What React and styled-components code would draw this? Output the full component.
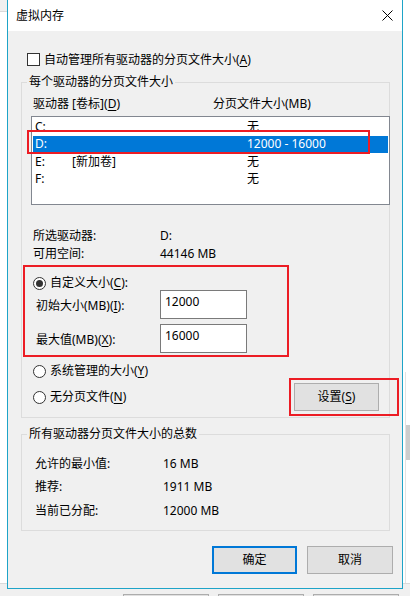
import styled, { createGlobalStyle } from "styled-components"

const GlobalStyle = createGlobalStyle`
  html, body {
    margin: 0;
    padding: 0;
  }
  body {
    background: #fff;
    font-family: "Noto Sans", "Noto Sans CJK SC", sans-serif;
    font-size: 12px;
    color: #000;
  }
  u {
    text-decoration: underline;
    text-underline-offset: 2px;
  }
`

const Desktop = styled.div`
  position: relative;
  width: 410px;
  height: 596px;
  overflow: hidden;
  background: #fff;
`

const BackCorner = styled.div`
  position: absolute;
  left: 0;
  top: 0;
  width: 7px;
  height: 11px;
  background: #f0f0f0;
  border-bottom: 1px solid #dadada;
`

const BackStrip = styled.div`
  position: absolute;
  left: 0;
  right: 0;
  top: 583px;
  bottom: 0;
  background: #f0f0f0;
  border-top: 1px solid #dadada;
  display: flex;
  gap: 9px;
  padding: 10px 0 0 123px;
`

const BackButton = styled.div`
  width: 86px;
  height: 20px;
  box-sizing: border-box;
  border: 1px solid #adadad;
  background: #e1e1e1;
`

const BackScroll = styled.div`
  position: absolute;
  left: 405px;
  top: 372px;
  width: 5px;
  height: 211px;
  border-left: 1px solid #e3e3e3;
  &::after {
    content: "";
    position: absolute;
    left: 0;
    top: 53px;
    width: 5px;
    height: 35px;
    background: #cdcdcd;
  }
`

const Dialog = styled.div`
  position: absolute;
  left: 7px;
  top: 0;
  width: 396px;
  height: 589px;
  box-sizing: border-box;
  border: 1px solid #1ea4c8;
  border-top: none;
  display: flex;
  flex-direction: column;
  background: #f0f0f0;
`

const TitleBar = styled.div`
  height: 31px;
  flex: none;
  display: flex;
  align-items: center;
  padding-left: 8px;
  background: #fff;
  line-height: 16px;
`

const CloseIcon = styled.svg`
  margin-left: auto;
  margin-right: 9px;
`

const Body = styled.div`
  flex: 1;
  display: flex;
  flex-direction: column;
  padding: 0 12px 0 13px;
`

const CheckRow = styled.label`
  margin: 22px 0 0 6px;
  height: 13px;
  display: flex;
  align-items: center;
  gap: 4px;
  line-height: 16px;
`

const CheckBox = styled.span`
  width: 13px;
  height: 13px;
  box-sizing: border-box;
  border: 1px solid #333;
  background: #fff;
  flex: none;
`

const Group = styled.fieldset`
  margin: ${(p) => p.$top}px 0 0 0;
  padding: 0 0 ${(p) => p.$bottom}px 0;
  border: 1px solid #dcdcdc;
  min-width: 0;
`

const Legend = styled.legend`
  margin-left: 5px;
  padding: 0 2px;
  line-height: 16px;
`

const ListHeader = styled.div`
  margin-top: 6px;
  padding-left: 11px;
  display: grid;
  grid-template-columns: 180px 1fr;
  line-height: 16px;
`

const ListWrap = styled.div`
  position: relative;
  margin: 4px -1px 0 9px;
`

const ListBox = styled.div`
  height: 89px;
  box-sizing: border-box;
  border: 1px solid #828790;
  background: #fff;
  padding: 1px;
`

const ListRow = styled.div`
  height: 17.5px;
  display: grid;
  grid-template-columns: 37px 175px 1fr;
  align-items: center;
  padding-left: 2px;
  line-height: 16px;
  background: ${(p) => (p.$selected ? "#0078d7" : "transparent")};
  color: ${(p) => (p.$selected ? "#fff" : "#000")};
`

const Callout = styled.div`
  position: absolute;
  left: ${(p) => p.$left}px;
  top: ${(p) => p.$top}px;
  width: ${(p) => p.$width}px;
  height: ${(p) => p.$height}px;
  box-sizing: border-box;
  border: 2px solid #ec1c24;
  pointer-events: none;
`

const InfoGrid = styled.div`
  margin-top: 23px;
  padding-left: 11px;
  display: grid;
  grid-template-columns: 127px 1fr;
  row-gap: 2px;
  line-height: 16px;
`

const CustomBox = styled.div`
  margin: 3px 0 0 1px;
  width: 266px;
  height: 92px;
  box-sizing: border-box;
  border: 2px solid #ec1c24;
  padding-top: 9px;
  display: flex;
  flex-direction: column;
`

const RadioRow = styled.label`
  height: ${(p) => p.$height || 16}px;
  display: flex;
  align-items: center;
  gap: 4px;
  padding-left: ${(p) => p.$indent || 0}px;
  line-height: 16px;
`

const Radio = styled.span`
  position: relative;
  width: 13px;
  height: 13px;
  box-sizing: border-box;
  border: 1px solid #333;
  border-radius: 50%;
  background: #fff;
  flex: none;
  &::after {
    content: "";
    display: ${(p) => (p.$checked ? "block" : "none")};
    position: absolute;
    left: 2px;
    top: 2px;
    width: 7px;
    height: 7px;
    border-radius: 50%;
    background: #333;
  }
`

const FieldRow = styled.div`
  display: flex;
  align-items: center;
  padding-left: 11px;
  margin-top: ${(p) => p.$top || 0}px;
  line-height: 16px;
`

const FieldLabel = styled.span`
  width: 124px;
  padding-top: 2px;
`

const NumberBox = styled.div`
  width: 87px;
  height: 29px;
  box-sizing: border-box;
  border: 1px solid #7a7a7a;
  background: #fff;
  padding: 3px 4px;
  line-height: 16px;
`

const BottomSection = styled.div`
  display: flex;
  justify-content: space-between;
  align-items: flex-start;
`

const RadioStack = styled.div`
  margin: 6px 0 0 11px;
  display: flex;
  flex-direction: column;
  gap: 10px;
`

const ButtonWrap = styled.div`
  position: relative;
  margin: 26px 10px 0 0;
`

const Button = styled.button`
  width: ${(p) => p.$width || 85}px;
  height: 28px;
  box-sizing: border-box;
  border: ${(p) => (p.$primary ? "2px solid #0078d7" : "1px solid #adadad")};
  background: #e1e1e1;
  font: inherit;
  color: #000;
  padding: 0;
  line-height: 16px;
`

const TotalGrid = styled.div`
  margin-top: 10px;
  padding-left: 13px;
  display: grid;
  grid-template-columns: 128px 1fr;
  grid-auto-rows: 23.5px;
  align-items: center;
  line-height: 16px;
`

const ButtonRow = styled.div`
  margin: 15px -3px 0 0;
  display: flex;
  justify-content: flex-end;
  gap: 10px;
`

const drives = [
  { letter: "C:", label: "", size: "无" },
  { letter: "D:", label: "", size: "12000 - 16000", selected: true },
  { letter: "E:", label: "[新加卷]", size: "无" },
  { letter: "F:", label: "", size: "无" },
]

const App = () => {
  return (
    <Desktop>
      <GlobalStyle />
      <BackCorner />
      <BackScroll />
      <BackStrip>
        <BackButton />
        <BackButton />
        <BackButton />
      </BackStrip>

      <Dialog>
        <TitleBar>
          虚拟内存
          <CloseIcon width="11" height="11" viewBox="0 0 11 11">
            <path d="M0.5 0.5 L10.5 10.5 M10.5 0.5 L0.5 10.5" stroke="#000" strokeWidth="1" fill="none" />
          </CloseIcon>
        </TitleBar>

        <Body>
          <CheckRow>
            <CheckBox />
            <span>自动管理所有驱动器的分页文件大小(<u>A</u>)</span>
          </CheckRow>

          <Group $top={8} $bottom={6}>
            <Legend>每个驱动器的分页文件大小</Legend>
            <ListHeader>
              <span>驱动器 [卷标](<u>D</u>)</span>
              <span>分页文件大小(MB)</span>
            </ListHeader>
            <ListWrap>
              <ListBox>
                {drives.map((d) => (
                  <ListRow key={d.letter} $selected={d.selected}>
                    <span>{d.letter}</span>
                    <span>{d.label}</span>
                    <span>{d.size}</span>
                  </ListRow>
                ))}
              </ListBox>
              <Callout $left={-4} $top={14} $width={343} $height={24} />
            </ListWrap>

            <InfoGrid>
              <span>所选驱动器:</span>
              <span>D:</span>
              <span>可用空间:</span>
              <span>44146 MB</span>
            </InfoGrid>

            <CustomBox>
              <RadioRow $height={14} $indent={8}>
                <Radio $checked />
                <span>自定义大小(<u>C</u>):</span>
              </RadioRow>
              <FieldRow>
                <FieldLabel>初始大小(MB)(<u>I</u>):</FieldLabel>
                <NumberBox>12000</NumberBox>
              </FieldRow>
              <FieldRow $top={5}>
                <FieldLabel>最大值(MB)(<u>X</u>):</FieldLabel>
                <NumberBox>16000</NumberBox>
              </FieldRow>
            </CustomBox>

            <BottomSection>
              <RadioStack>
                <RadioRow>
                  <Radio />
                  <span>系统管理的大小(<u>Y</u>)</span>
                </RadioRow>
                <RadioRow>
                  <Radio />
                  <span>无分页文件(<u>N</u>)</span>
                </RadioRow>
              </RadioStack>
              <ButtonWrap>
                <Button>设置(<u>S</u>)</Button>
                <Callout $left={-5} $top={-5} $width={110} $height={38} />
              </ButtonWrap>
            </BottomSection>
          </Group>

          <Group $top={8} $bottom={7}>
            <Legend>所有驱动器分页文件大小的总数</Legend>
            <TotalGrid>
              <span>允许的最小值:</span>
              <span>16 MB</span>
              <span>推荐:</span>
              <span>1911 MB</span>
              <span>当前已分配:</span>
              <span>12000 MB</span>
            </TotalGrid>
          </Group>

          <ButtonRow>
            <Button $primary>确定</Button>
            <Button $width={86}>取消</Button>
          </ButtonRow>
        </Body>
      </Dialog>
    </Desktop>
  )
}

export default App
